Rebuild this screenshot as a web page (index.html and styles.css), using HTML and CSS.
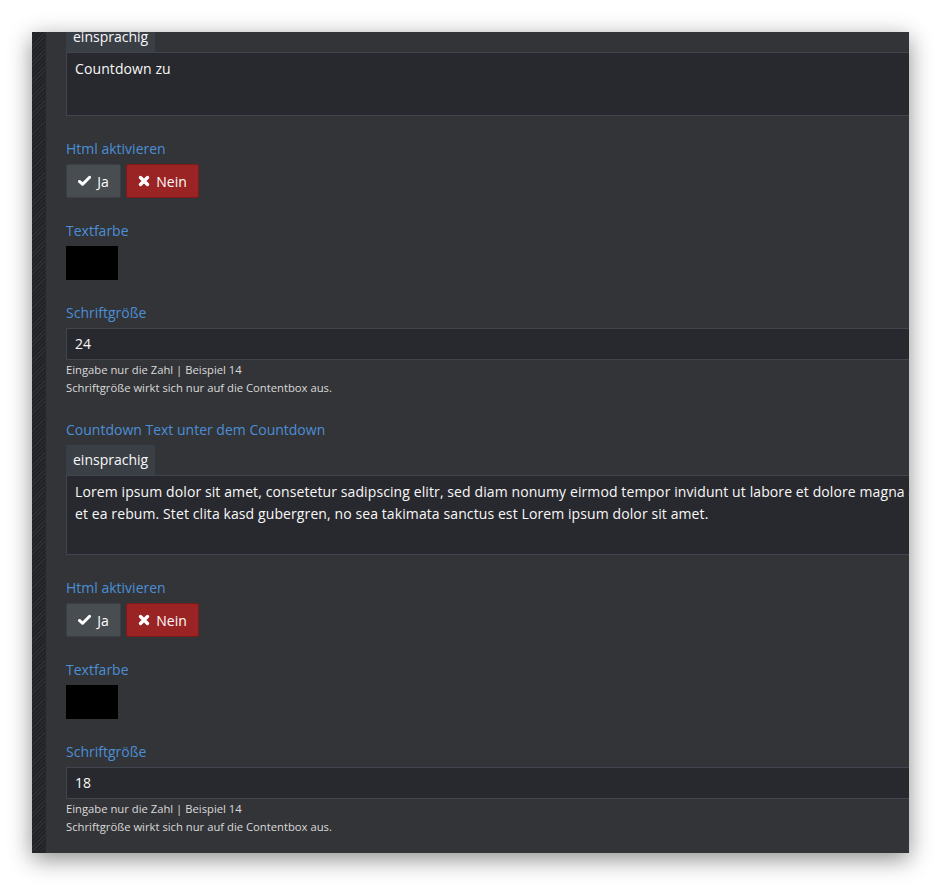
FILE: index.html
```html
<!DOCTYPE html>
<html lang="de">
<head>
  <meta charset="UTF-8">
  <title>Countdown Einstellungen</title>
  <link rel="stylesheet" href="styles.css">
</head>
<body>

<div class="window">
  <div class="side-strip"></div>

  <div class="content">
    <div class="form">

      <!-- Countdown zu -->
      <div class="field first">
        <div class="lang-tabs"><span class="tab">einsprachig</span></div>
        <div class="textbox small">Countdown zu</div>
      </div>

      <div class="field">
        <label class="field-label">Html aktivieren</label>
        <div class="btn-group">
          <button class="btn btn-yes">
            <svg class="icon" viewBox="0 0 14 12"><path d="M1.5 6.5 L5 9.5 L12.5 2" fill="none" stroke="currentColor" stroke-width="3.2" stroke-linejoin="round" stroke-linecap="round"/></svg>
            Ja
          </button>
          <button class="btn btn-no">
            <svg class="icon" viewBox="0 0 12 12"><path d="M2.5 2.5 L9.5 9.5 M9.5 2.5 L2.5 9.5" fill="none" stroke="currentColor" stroke-width="3.4" stroke-linecap="round"/></svg>
            Nein
          </button>
        </div>
      </div>

      <div class="field">
        <label class="field-label">Textfarbe</label>
        <div class="swatch"></div>
      </div>

      <div class="field">
        <label class="field-label">Schriftgröße</label>
        <div class="input">24</div>
        <div class="help">Eingabe nur die Zahl | Beispiel 14</div>
        <div class="help">Schriftgröße wirkt sich nur auf die Contentbox aus.</div>
      </div>

      <!-- Countdown Text unter dem Countdown -->
      <div class="field">
        <label class="field-label">Countdown Text unter dem Countdown</label>
        <div class="lang-tabs"><span class="tab">einsprachig</span></div>
        <div class="textbox large">Lorem ipsum dolor sit amet, consetetur sadipscing elitr, sed diam nonumy eirmod tempor invidunt ut labore et dolore magna aliquyam erat, sed diam voluptua. At vero eos et accusam et justo duo dolores
et ea rebum. Stet clita kasd gubergren, no sea takimata sanctus est Lorem ipsum dolor sit amet.</div>
      </div>

      <div class="field">
        <label class="field-label">Html aktivieren</label>
        <div class="btn-group">
          <button class="btn btn-yes">
            <svg class="icon" viewBox="0 0 14 12"><path d="M1.5 6.5 L5 9.5 L12.5 2" fill="none" stroke="currentColor" stroke-width="3.2" stroke-linejoin="round" stroke-linecap="round"/></svg>
            Ja
          </button>
          <button class="btn btn-no">
            <svg class="icon" viewBox="0 0 12 12"><path d="M2.5 2.5 L9.5 9.5 M9.5 2.5 L2.5 9.5" fill="none" stroke="currentColor" stroke-width="3.4" stroke-linecap="round"/></svg>
            Nein
          </button>
        </div>
      </div>

      <div class="field">
        <label class="field-label">Textfarbe</label>
        <div class="swatch"></div>
      </div>

      <div class="field">
        <label class="field-label">Schriftgröße</label>
        <div class="input">18</div>
        <div class="help">Eingabe nur die Zahl | Beispiel 14</div>
        <div class="help">Schriftgröße wirkt sich nur auf die Contentbox aus.</div>
      </div>

    </div>
  </div>
</div>

</body>
</html>
```

FILE: styles.css
```css
:root {
  --window-bg: #333438;
  --field-bg: #28292e;
  --field-border: #3f4650;
  --tab-bg: #3a3f46;
  --label: #4b8fd6;
  --text: #f8f8f8;
  --help: #dadada;
}

body {
  margin: 0;
  padding: 32px;
  background: #ffffff;
  font-family: 'Open Sans', 'Noto Sans', Arial, sans-serif;
}

.window {
  width: 877px;
  height: 821px;
  display: flex;
  overflow: hidden;
  background: var(--window-bg);
  box-shadow: 0 6px 22px rgba(0, 0, 0, 0.45);
}

.side-strip {
  width: 13px;
  flex-shrink: 0;
  background: repeating-linear-gradient(
    135deg,
    #2e2f33 0,
    #2e2f33 1px,
    #222326 1px,
    #222326 3px
  );
  border-right: 1px solid #26272a;
}

.content {
  flex: 1;
  padding-left: 20px;
  overflow: hidden;
}

/* the panel is scrolled a little, so the first tab is cut */
.form {
  width: 900px;
  margin-top: -10px;
}

.field {
  margin-bottom: 23px;
}

.field-label {
  display: block;
  color: var(--label);
  font-size: 14px;
  line-height: 20px;
  margin-bottom: 5px;
}

.lang-tabs {
  display: flex;
}

.field-label + .lang-tabs {
  margin-top: 1px;
}

.tab {
  background: var(--tab-bg);
  color: var(--text);
  font-size: 14px;
  line-height: 30px;
  padding: 0 7px;
}

.textbox {
  background: var(--field-bg);
  border: 1px solid var(--field-border);
  color: var(--text);
  font-size: 14px;
  letter-spacing: 0.1px;
  line-height: 22px;
  padding: 5px 8px;
  white-space: pre;
  box-sizing: border-box;
}

.textbox.small {
  height: 64px;
}

.textbox.large {
  height: 80px;
}

.btn-group {
  display: flex;
  gap: 5px;
}

.btn {
  display: flex;
  align-items: center;
  justify-content: center;
  gap: 6px;
  height: 34px;
  padding: 0;
  border-radius: 2px;
  font-family: inherit;
  font-size: 14px;
  color: #ffffff;
  cursor: pointer;
}

.btn-yes {
  width: 55px;
  background: #484d52;
  border: 1px solid #3c4045;
}

.btn-no {
  width: 73px;
  background: #9a2323;
  border: 1px solid #7c1a1a;
}

.icon {
  width: 13px;
  height: 12px;
}

.btn-no .icon {
  width: 12px;
  height: 12px;
}

.swatch {
  width: 52px;
  height: 34px;
  background: #000000;
}

.input {
  height: 32px;
  box-sizing: border-box;
  background: var(--field-bg);
  border: 1px solid var(--field-border);
  color: var(--text);
  font-size: 14px;
  line-height: 30px;
  padding: 0 8px;
}

.input + .help {
  margin-top: 1px;
}

.help {
  color: var(--help);
  font-size: 11.25px;
  line-height: 18px;
}
```
